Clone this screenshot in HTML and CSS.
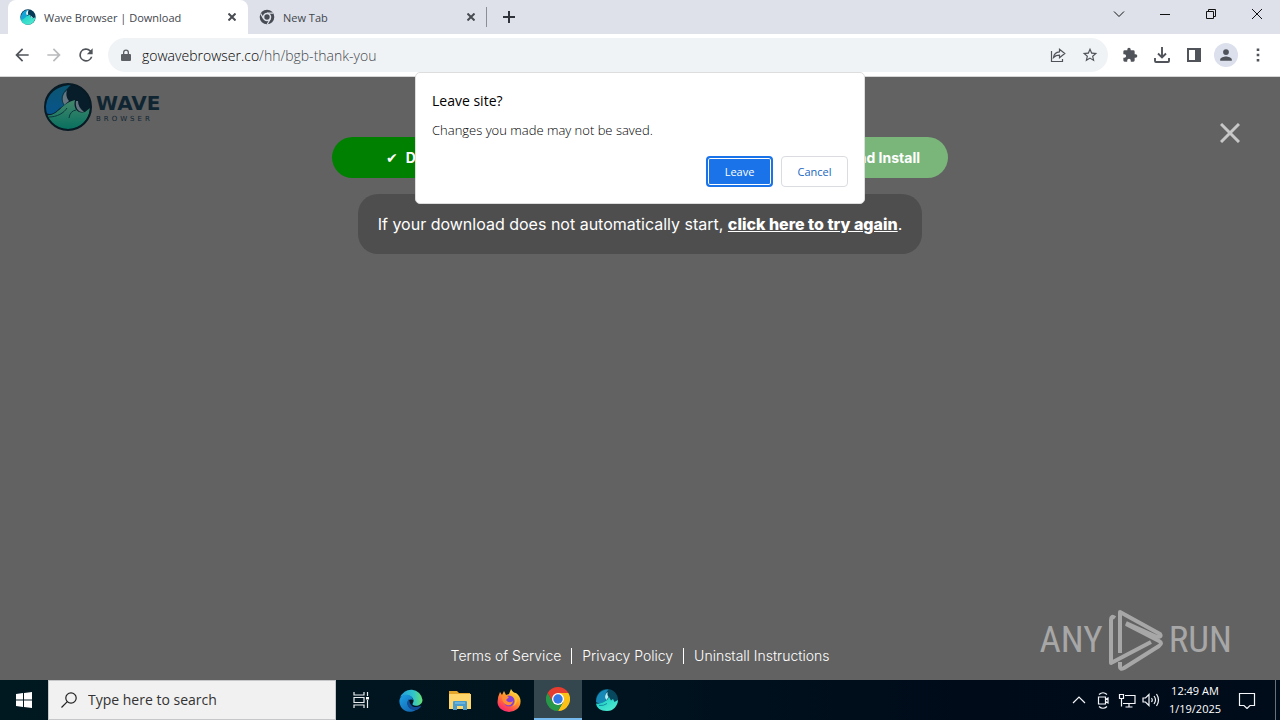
FILE: index.html
```html
<!DOCTYPE html>
<html lang="en">
<head>
<meta charset="utf-8">
<title>Wave Browser | Download</title>
<link rel="stylesheet" href="styles.css">
</head>
<body>
<svg class="defs" width="0" height="0" aria-hidden="true">
  <defs>
    <linearGradient id="sea" x1="0" y1="0" x2="0" y2="1"><stop offset="0" stop-color="#087ba8"/><stop offset="1" stop-color="#10b6c4"/></linearGradient>
    <linearGradient id="foam" x1="0" y1="0" x2="1" y2="1"><stop offset="0" stop-color="#13c9c7"/><stop offset="1" stop-color="#58f0d0"/></linearGradient>
    <linearGradient id="sea-dim" x1="0" y1="0" x2="0" y2="1"><stop offset="0" stop-color="#0c5570"/><stop offset="1" stop-color="#07548c"/></linearGradient>
    <linearGradient id="foam-dim" x1="0" y1="0" x2="0" y2="1"><stop offset="0" stop-color="#43886b"/><stop offset="1" stop-color="#08705f"/></linearGradient>
    <linearGradient id="edge-a" x1="0" y1="0" x2="1" y2="0"><stop offset="0" stop-color="#239bdb"/><stop offset=".6" stop-color="#30c6cb"/><stop offset="1" stop-color="#68df70"/></linearGradient>
    <linearGradient id="edge-b" x1="0" y1="0" x2="1" y2="1"><stop offset="0" stop-color="#1ba1e5"/><stop offset="1" stop-color="#1259a7"/></linearGradient>
    <linearGradient id="fire" x1=".8" y1="0" x2=".2" y2="1"><stop offset="0" stop-color="#fff04d"/><stop offset=".4" stop-color="#ff9a27"/><stop offset=".8" stop-color="#ff4057"/><stop offset="1" stop-color="#ef2380"/></linearGradient>
  </defs>
</svg>

<div class="tabstrip">
  <div class="tab tab-active">
    <svg class="tab-icon" viewBox="0 0 48 48"><circle cx="24" cy="24" r="23" fill="#073a56"/><path d="M2 32C1 15 10 3 25 2C18 8 18 14 23 23C15 26 11 34 2 32Z" fill="#14a5d8"/><path d="M2 31C12 34 17 19 30 17C31 25 36 31 46 25C45 38 36 47 24 47C12 47 4 40 2 31Z" fill="url(#foam)"/><path d="M23 4C18 9 17 13 20 18L25 17C24 12 23 9 26 4ZM31 19L35 28L39 26Z" fill="#e1f8ff"/></svg>
    <span class="tab-title">Wave Browser | Download</span>
    <button class="tab-close" aria-label="Close Wave Browser tab"><svg viewBox="0 0 8 8"><path d="M.5.5l7 7M7.500.5l-7 7"/></svg></button>
  </div>
  <div class="tab tab-idle">
    <svg class="tab-icon" viewBox="0 0 16 16"><circle cx="8" cy="8" r="5.800" fill="none" stroke="#474b53" stroke-width="3"/><circle cx="8" cy="8" r="2.700" fill="#474b53"/><path d="M8 4.200h6.200M4.700 9.900L1.600 4.500M11.300 9.900l-3.100 5.400" stroke="#dee1e9" stroke-width="1.200" fill="none"/></svg>
    <span class="tab-title">New Tab</span>
    <button class="tab-close" aria-label="Close New Tab"><svg viewBox="0 0 8 8"><path d="M.5.5l7 7M7.500.5l-7 7"/></svg></button>
  </div>
  <button class="new-tab" aria-label="New tab"><svg viewBox="0 0 12 12"><path d="M6 0v12M0 6h12"/></svg></button>
  <div class="window-controls">
    <button aria-label="Search tabs"><svg viewBox="0 0 12 12"><path d="M1 3.500l5 5 5-5"/></svg></button>
    <button aria-label="Minimize"><svg viewBox="0 0 12 12"><path d="M1 6.500h10"/></svg></button>
    <button aria-label="Restore"><svg viewBox="0 0 12 12"><path d="M1.500 3.500h7v7h-7zM3.500 3.500v-2h7v7h-2"/></svg></button>
    <button aria-label="Close"><svg viewBox="0 0 12 12"><path d="M1 1l10 10M11 1L1 11"/></svg></button>
  </div>
</div>

<div class="toolbar">
  <button class="tool" aria-label="Back"><svg viewBox="0 0 24 24"><path d="M20 11H7.830l5.590-5.590L12 4l-8 8 8 8 1.410-1.410L7.830 13H20z"/></svg></button>
  <button class="tool tool-off" aria-label="Forward"><svg viewBox="0 0 24 24"><path d="M4 11h12.170l-5.590-5.590L12 4l8 8-8 8-1.410-1.410L16.170 13H4z"/></svg></button>
  <button class="tool" aria-label="Reload"><svg viewBox="0 0 24 24"><path d="M17.650 6.350A8 8 0 1 0 19.730 14h-2.080A6 6 0 1 1 12 6c1.660 0 3.140.69 4.220 1.780L13 11h7V4z"/></svg></button>
  <div class="address">
    <svg class="lock" viewBox="0 0 10 12"><path d="M2 5V3.500a3 3 0 0 1 6 0V5h1q1 0 1 1v5q0 1-1 1H1q-1 0-1-1V6q0-1 1-1zM3.300 5h3.400V3.500a1.700 1.700 0 0 0-3.400 0z"/></svg>
    <a class="url" href="#"><span class="host">gowavebrowser.co</span>/hh/bgb-thank-you</a>
    <button class="tool" aria-label="Share"><svg viewBox="0 0 16 16"><path d="M1.500 4v10.500h11V12M3.500 10.500C4 7 6 5 9.500 4.800V2.200L14.800 6.500 9.500 10.800V8.200C7 8.200 5 9 3.500 10.500z" fill="none" stroke="currentColor" stroke-width="1.200"/></svg></button>
    <button class="tool" aria-label="Bookmark"><svg viewBox="1 1 22 22"><path d="M22 9.240l-7.190-.62L12 2 9.190 8.630 2 9.240l5.460 4.730L5.820 21 12 17.270 18.180 21l-1.630-7.030zM12 15.400l-3.760 2.270 1-4.280-3.320-2.880 4.380-.38L12 6.100l1.710 4.040 4.380.38-3.320 2.880 1 4.280z"/></svg></button>
  </div>
  <div class="tools-right">
    <button class="tool" aria-label="Extensions"><svg viewBox="0 0 24 24"><path d="M20.500 11H19V7a2 2 0 0 0-2-2h-4V3.500a2.500 2.500 0 0 0-5 0V5H4a2 2 0 0 0-2 2v3.800h1.500a2.700 2.700 0 0 1 0 5.400H2V20a2 2 0 0 0 2 2h3.800v-1.500a2.700 2.700 0 0 1 5.400 0V22H17a2 2 0 0 0 2-2v-4h1.500a2.500 2.500 0 0 0 0-5z"/></svg></button>
    <button class="tool" aria-label="Downloads"><svg viewBox="0 0 16 16"><path d="M8 0v10M4 6.500l4 4 4-4M1 11v3q0 1 1 1h12q1 0 1-1v-3" fill="none" stroke="currentColor" stroke-width="1.900"/></svg></button>
    <button class="tool" aria-label="Side panel"><svg viewBox="0 0 16 16"><path d="M1 1h14v14H1zM3 3v10h6V3z" fill-rule="evenodd"/></svg></button>
    <button class="tool avatar" aria-label="Profile"><svg viewBox="1 1 22 22"><path d="M12 12a4 4 0 1 0 0-8 4 4 0 0 0 0 8zm0 2c-2.670 0-8 1.340-8 4v2h16v-2c0-2.660-5.330-4-8-4z"/></svg></button>
    <button class="tool" aria-label="Menu"><svg viewBox="0 0 16 16"><path d="M6.700 1.500h2.600v2.600H6.700zM6.700 6.700h2.600v2.600H6.700zM6.700 11.900h2.600v2.600H6.700z"/></svg></button>
  </div>
</div>

<main class="page">
  <header class="site-header">
    <svg class="brand-mark" viewBox="0 0 48 48"><circle cx="24" cy="24" r="23" fill="#071d2a"/><path d="M2 30C0 13 11 3 27 2C20 7 19 13 22 21C14 25 10 34 2 30Z" fill="url(#sea-dim)"/><path d="M2 32C14 34 17 20 31 17C29 25 33 31 41 29L46 25C45 38 36 46 24 46C12 46 4 40 2 32Z" fill="url(#foam-dim)"/><path d="M23 7C18 12 17 17 20 22L25 18C22 14 22 11 23 7ZM32 18C31 24 34 30 40 29C36 26 34 22 34 18Z" fill="#667681"/><path d="M5 34C13 34 20 30 23 25M25 35Q26 28 32 27M24 5C17 11 17 17 20 22" stroke="#0c3840" fill="none"/><circle cx="24" cy="24" r="23" fill="none" stroke="#081a24" stroke-width="2"/></svg>
    <div class="brand-text"><span class="brand-name">WAVE</span><span class="brand-sub">BROWSER</span></div>
  </header>
  <div class="steps">
    <div class="step step-done"><span class="check">✔</span>Download</div>
    <div class="step step-next">and Install</div>
  </div>
  <p class="retry">If your download does not automatically start, <a href="#">click here to try again</a>.</p>
  <footer class="links">
    <a href="#">Terms of Service</a><a href="#">Privacy Policy</a><a href="#">Uninstall Instructions</a>
  </footer>
  <button class="page-close" aria-label="Close page"><svg viewBox="0 0 20 20"><path d="M1 1l18 18M19 1L1 19"/></svg></button>
  <div class="watermark">
    <span>ANY</span>
    <svg viewBox="0 0 56 64"><path d="M7 10Q3 7 3 12V55L43 34M12 45V4L52 26Q54 29 49 29L18 15M12 54V59Q12 62 16 60L51 38Q55 35 51 33L18 16" /></svg>
    <span>RUN</span>
  </div>
</main>

<footer class="taskbar">
  <button class="task" aria-label="Start"><svg class="glyph-16" viewBox="0 0 16 16"><path d="M0 2l7-1v6.500H0zM8 .9L16 0v7.500H8zM0 8.500h7V15l-7-1zM8 8.500h8V16l-8-1z" fill="#fff"/></svg></button>
  <label class="search"><svg viewBox="0 0 16 16"><circle cx="10" cy="6" r="5.200"/><path d="M6.300 9.700L.5 15.500"/></svg><input type="text" placeholder="Type here to search" aria-label="Type here to search"></label>
  <button class="task task-view" aria-label="Task view"><svg class="glyph-16" viewBox="0 0 16 16" fill="none" stroke="#e9edef" stroke-width="1.200"><path d="M1 0v3h10V0M1 5.500h10v5H1zM1 16v-3h10v3M14.500 0v4M14.500 8v8"/><path d="M13 5h3v2.500h-3z" fill="#fff" stroke="none"/></svg></button>
  <button class="task app" aria-label="Microsoft Edge"><svg viewBox="0 0 24 24"><path d="M1 10A11.500 11.500 0 0 1 23.500 12C23.500 17 17 19 14 17C12.500 16 15 14.500 14.500 12C13 6 4 6 1 10Z" fill="url(#edge-a)"/><path d="M.5 12C2 5 13 5 14 12C9 10 7 15 10 19C12 22 18 22 21 18C17 25 6 26 2 19Q0 16 .5 12Z" fill="url(#edge-b)"/><path d="M10 11C6 15 9 23 18 22C22 20 23 17 21 18C17 20 11 20 10 11Z" fill="#124c96"/></svg></button>
  <button class="task app" aria-label="File Explorer"><svg viewBox="0 0 24 24"><path d="M1 3h8l2 2h11v16H1z" fill="#e4a72c"/><path d="M1 6h22v15H1z" fill="#ffd66b"/><path d="M5 14q0-1 1-1h12q1 0 1 1v8h-4v-4H9v4H5z" fill="#4a9ccc"/><path d="M7 15h10" stroke="#8bcae8"/></svg></button>
  <button class="task app" aria-label="Firefox"><svg viewBox="0 0 24 24"><path d="M3 4L5 7L7 3L9 7L12 6L14 1Q16 5 19 5Q24 9 23.500 14A11.500 10 0 0 1 .5 14Q.5 9 3 4Z" fill="url(#fire)"/><circle cx="12" cy="13" r="5.500" fill="#8540d8"/><path d="M5 8Q9 7 12 9L9 12Q12 16 16 13Q15 18 10 17Q5 16 5 8Z" fill="#ff8e32"/><path d="M12 7Q18 7 18 13Q18 18 14 19Q21 17 20 10Q17 6 12 7Z" fill="#ffbd33"/></svg></button>
  <button class="task app task-current" aria-label="Google Chrome"><svg viewBox="0 0 24 24"><path d="M1.600 6A12 12 0 0 1 22.400 6H12L6.800 15Z" fill="#e53d2f"/><path d="M22.400 6A12 12 0 0 1 12 24L17.200 15L12 6Z" fill="#fbc116"/><path d="M12 24A12 12 0 0 1 1.600 6L6.800 15Q12 20 17.200 15Z" fill="#279847"/><circle cx="12" cy="12" r="6" fill="#fff"/><circle cx="12" cy="12" r="4.700" fill="#3478e5"/></svg></button>
  <button class="task app" aria-label="Wave Browser"><svg viewBox="0 0 48 48"><circle cx="24" cy="24" r="22" fill="#08485e"/><path d="M2 28C3 12 13 2 27 3C19 11 20 18 22 25L11 32Z" fill="#1689b8"/><path d="M2 31C13 33 19 27 25 23L28 18L32 25L36 22L39 28L46 24C45 36 37 46 24 46C11 46 3 40 2 31Z" fill="url(#foam)"/><path d="M25 8C19 14 19 20 23 24L27 18Q24 13 25 8Z" fill="#b2eef8"/><path d="M8 35Q17 36 24 31" fill="none" stroke="#158ba1" stroke-width="2"/></svg></button>
  <div class="tray">
    <button class="tray-button" aria-label="Show hidden icons"><svg viewBox="0 0 18 18"><path d="M3 12l6-6 6 6"/></svg></button>
    <button class="tray-button" aria-label="Camera"><svg viewBox="0 0 18 18"><path d="M4.500 6h7v7h-7zM11.500 8.500L14 7v5l-2.500-1.500M5 3.500Q9 0 13 3.500M5 15.500Q9 19 13 15.500"/></svg></button>
    <button class="tray-button" aria-label="Network"><svg viewBox="0 0 18 18"><path d="M7 4.500h10v8H5M11 13v3M7.500 16h7M1.500 3.500h4v4h-4zM3.500 7.500v8"/></svg></button>
    <button class="tray-button" aria-label="Volume"><svg viewBox="0 0 18 18"><path d="M1 7h2.500L7 3.500v11L3.500 11H1zM9.500 7q1.500 2 0 4M12 5q3 4 0 8M14.500 3q4 6 0 12"/></svg></button>
    <div class="clock"><time>12:49 AM</time><time>1/19/2025</time></div>
    <button class="notice" aria-label="Notifications"><svg viewBox="0 0 18 18"><path d="M1.500 2.500h15v12H12l-3 3-3-3H1.500z"/></svg></button>
    <button class="desktop" aria-label="Show desktop"></button>
  </div>
</footer>

<section class="dialog" role="dialog" aria-labelledby="leave-title">
  <h1 id="leave-title">Leave site?</h1>
  <p>Changes you made may not be saved.</p>
  <div class="dialog-actions"><button class="leave">Leave</button><button class="cancel">Cancel</button></div>
</section>
</body>
</html>
```

FILE: styles.css
```css
* { box-sizing: border-box; }
body {
  position: relative;
  display: flex;
  flex-direction: column;
  min-height: 100vh;
  margin: 0;
  font-family: "Open Sans", "Noto Sans", sans-serif;
  overflow: hidden;
}
button { padding: 0; border: 0; background: none; font: inherit; color: inherit; }
svg { display: block; flex: none; }
.defs { position: absolute; }

.tabstrip { display: flex; height: 34px; background: #dee1e9; color: #42464d; }
.tab { display: flex; align-items: center; gap: 8px; font-size: 11px; }
.tab-active { width: 240px; margin-left: 8px; padding: 0 8px 0 12px; background: #fff; border-radius: 8px 8px 0 0; }
.tab-idle { width: 239px; height: 20px; margin-top: 7px; padding: 0 7px 0 11px; border-right: 1px solid #8b8e95; }
.tab-icon { width: 16px; height: 16px; }
.tab-title { flex: 1; white-space: nowrap; }
.tab-close svg { width: 8px; height: 8px; margin: 4px; stroke: #484c52; stroke-width: 2; fill: none; }
.new-tab { width: 44px; }
.new-tab svg { width: 12px; height: 12px; margin: auto; stroke: #30343a; stroke-width: 2; }
.window-controls { display: flex; height: 28px; margin-left: auto; color: #111; }
.window-controls button { width: 46px; }
.window-controls svg { width: 12px; height: 12px; margin: auto; fill: none; stroke: currentColor; }

.toolbar { display: flex; align-items: center; height: 43px; padding: 0 10px; background: #fff; border-bottom: 1px solid #d5d6d8; }
.tool { display: grid; place-items: center; width: 24px; height: 24px; margin-right: 8px; color: #50545a; }
.tool svg { width: 16px; height: 16px; fill: currentColor; }
.toolbar > .tool svg { width: 20px; height: 20px; }
.toolbar > .tool-off { color: #b8babd; }
.address { display: flex; flex: 1; align-items: center; height: 34px; margin-left: 2px; padding-left: 13px; border-radius: 17px; background: #f0f3f5; }
.lock { width: 10px; height: 12px; margin-right: 11px; fill: #5c6065; }
.url { flex: 1; font-size: 14px; font-weight: 300; color: #45494e; text-decoration: none; }
.host { color: #000; }
.address .tool:last-child { margin-right: 6px; }
.tools-right { display: flex; margin-left: 10px; }
.tools-right .tool:last-child { margin-right: 0; }
.avatar { border-radius: 50%; background: #dce0ec; }

.page { position: relative; display: flex; flex: 1; flex-direction: column; align-items: center; background: #626262; color: #fff; font-family: Inter, sans-serif; }
.site-header { display: flex; align-self: stretch; align-items: center; gap: 4px; height: 60px; padding-left: 44px; }
.brand-mark { width: 48px; height: 48px; }
.brand-text { display: flex; flex-direction: column; color: #102532; }
.brand-name { font: bold 20px/24px "DejaVu Sans", sans-serif; }
.brand-sub { font: 7px/9px "DejaVu Sans", sans-serif; letter-spacing: 3px; }
.steps { display: flex; gap: 16px; width: 616px; max-width: 100%; }
.step { flex: 1; padding: 12px 28px; border-radius: 21px; font-size: 14px; line-height: 17px; font-weight: 700; }
.step-done { padding-left: 54px; background: #008000; }
.check { margin-right: 8px; font-family: "DejaVu Sans", sans-serif; font-weight: 400; line-height: 1; }
.step-next { background: #7ab67a; text-align: right; }
.retry { margin: 16px 0 0; padding: 20px; border-radius: 20px; background: #4e4e4e; font-size: 16px; line-height: 20px; }
.retry a { color: inherit; font-weight: 800; }
.links { display: flex; margin-top: auto; padding-bottom: 16px; font-size: 14px; line-height: 16px; font-weight: 300; }
.links a { padding: 0 10px; color: inherit; text-decoration: none; }
.links a + a { border-left: 1px solid #fff; }
.page-close { position: absolute; top: 46px; right: 40px; }
.page-close svg { width: 20px; height: 20px; fill: none; stroke: #c7c7c7; stroke-width: 3; }
.watermark { position: absolute; right: 48px; bottom: 8px; display: flex; align-items: center; gap: 5px; color: #a7a7a7; font: 37px/64px "Roboto Condensed", "Liberation Sans Narrow", sans-serif; }
.watermark svg { width: 56px; height: 64px; fill: none; stroke: currentColor; stroke-width: 4; stroke-linejoin: round; }

.taskbar { display: flex; height: 40px; background: linear-gradient(90deg, #001820, #00131e 50%, #000b1a 75%, #000c19); color: #fff; }
.task { display: grid; place-items: center; width: 48px; }
.task + .task { margin-left: 1px; }
.task-view { width: 50px; }
.task.app svg { width: 24px; height: 24px; }
.task-current { border-bottom: 2px solid #76b9ed; background: #34464e; }
.glyph-16 { width: 16px; height: 16px; }
.search { display: flex; align-items: center; width: 288px; padding: 0 12px; gap: 11px; border: 1px solid #c5c7c8; background: #f1f1f1; }
.search svg { width: 16px; height: 16px; fill: none; stroke: #222; stroke-width: 1.2; }
.search input { flex: 1; min-width: 0; padding: 0; border: 0; outline: 0; background: none; font: 14px/20px "Open Sans", sans-serif; }
.search input::placeholder { color: #333; opacity: 1; }
.tray { display: flex; align-items: center; margin-left: auto; }
.tray-button { display: grid; place-items: center; width: 24px; height: 40px; }
.tray svg { width: 18px; height: 18px; fill: none; stroke: #f4f6fa; stroke-width: 1.2; }
.clock { display: flex; flex-direction: column; width: 64px; text-align: center; font-size: 11px; line-height: 18px; white-space: nowrap; }
.notice { display: grid; place-items: center; width: 40px; margin-right: 8px; }
.desktop { width: 5px; height: 40px; border-left: 1px solid #68717b; }

.dialog { position: absolute; top: 72px; left: 50%; width: 450px; padding: 18px 16px 16px; transform: translateX(-50%); border: 1px solid #ddd; border-radius: 5px; background: #fff; color: #000; }
.dialog h1 { margin: 0; font-size: 14px; line-height: 20px; font-weight: 400; }
.dialog p { margin: 10px 0 16px; font-size: 13px; line-height: 19px; font-weight: 300; }
.dialog-actions { display: flex; justify-content: flex-end; gap: 8px; font-size: 11px; }
.dialog-actions button { width: 67px; height: 31px; border-radius: 4px; }
.leave { border: 2px solid #1a73e8; background: #1a73e8; color: #fff; box-shadow: inset 0 0 0 1px #fff; }
.cancel { border: 1px solid #dadce0; color: #1967c0; }
```
